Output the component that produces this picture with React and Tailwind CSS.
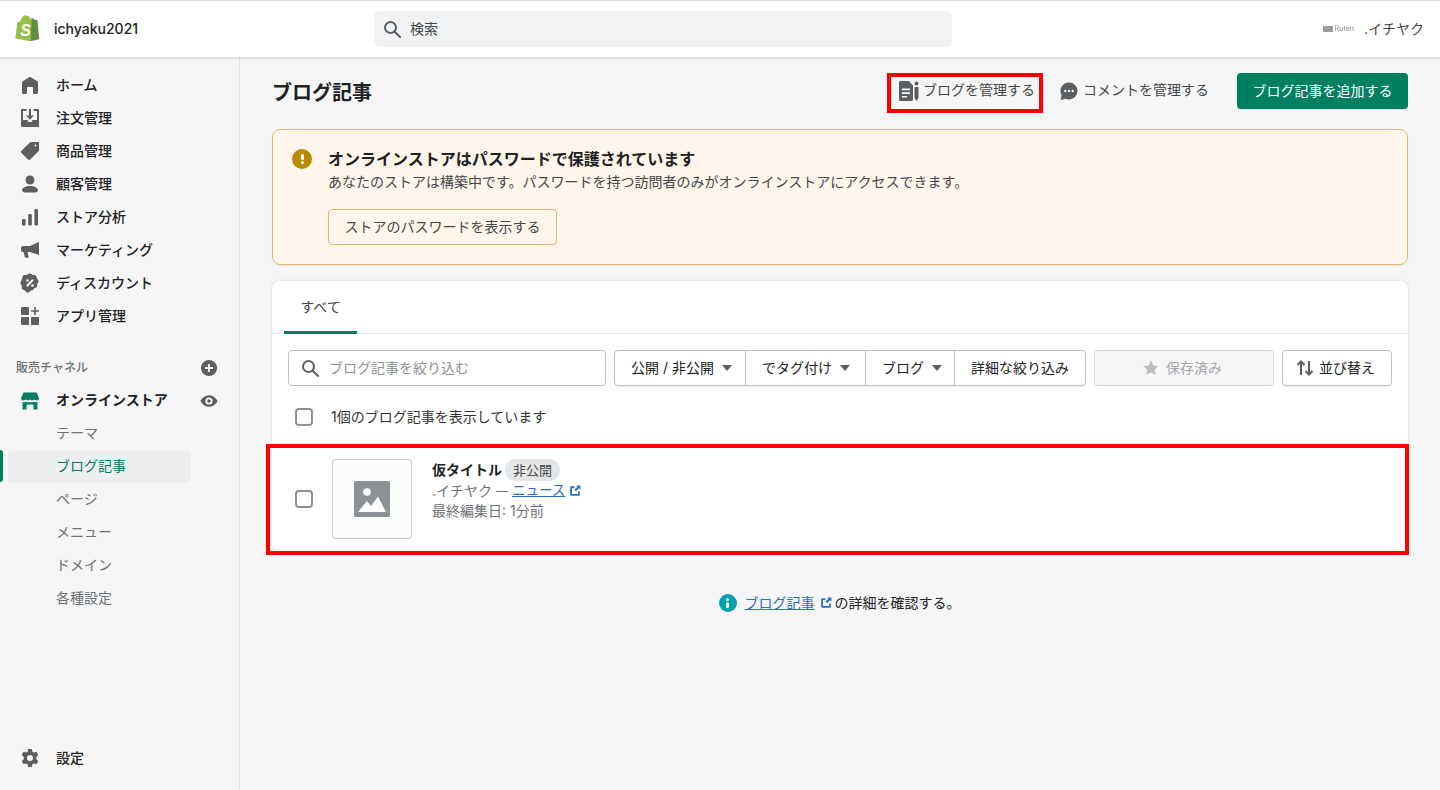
import React from 'react';

const Icon = ({ className = 'w-5 h-5 fill-[#5c5f62]', children }) => (
    <svg viewBox="0 0 20 20" className={className}>{children}</svg>
);

const HomeIcon = () => (
    <Icon><path d="M18 7.600V17.500c0 .8-.7 1.500-1.500 1.500h-2c-.8 0-1.500-.7-1.500-1.500V13c0-.6-.4-1-1-1H8c-.6 0-1 .4-1 1v4.500c0 .8-.7 1.500-1.500 1.500h-2C2.700 19 2 18.300 2 17.500V7.600c0-.5.300-1 .700-1.300l6.500-4.100c.5-.3 1.100-.3 1.600 0l6.500 4.100c.4.300.700.800.700 1.300z" /></Icon>
);
const OrdersIcon = () => (
    <Icon><path fillRule="evenodd" d="M1 1.800C1 1.300 1.400 1 1.800 1H6.500v2H3v9h4.500l1 2h3l1-2H17V3h-3.500V1h4.700c.5 0 .8.300.8.800v16.400c0 .5-.3.800-.8.800H1.800c-.4 0-.8-.3-.8-.8V1.800z" /><path d="M9 1h2v6.500h2.800L10 11.800 6.200 7.500H9V1z" /></Icon>
);
const TagIcon = () => (
    <Icon><path fillRule="evenodd" d="M11 1h7c.6 0 1 .4 1 1v7c0 .5-.2.9-.5 1.200l-8.300 8.300c-.6.6-1.600.6-2.200 0l-6.500-6.500c-.6-.6-.6-1.600 0-2.200l8.300-8.300c.3-.3.700-.5 1.200-.5zm4.500 2.500a1 1 0 1 0 0 2 1 1 0 0 0 0-2z" /></Icon>
);
const CustomerIcon = () => (
    <Icon><circle cx="10" cy="6" r="4.500" /><path d="M10 12c4.400 0 8 1.700 8 4.100 0 1.700-1.200 2.400-2.700 2.400H4.700C3.200 18.500 2 17.800 2 16.100 2 13.700 5.600 12 10 12z" /></Icon>
);
const AnalyticsIcon = () => (
    <Icon>
        <rect x="2" y="12" width="3.600" height="6.500" rx="1.200" />
        <rect x="8.200" y="7" width="3.600" height="11.500" rx="1.200" />
        <rect x="14.400" y="2" width="3.600" height="16.500" rx="1.200" />
    </Icon>
);
const MarketingIcon = () => (
    <Icon><path d="M19 2v13l-9-3H7.500l1.200 5c.1.500-.2.800-.7.800H5.600c-.3 0-.6-.2-.7-.5L3.500 12H3C1.900 12 1 11 1 10V8c0-1 .9-2 2-2h7l9-4z" /></Icon>
);
const DiscountIcon = () => (
    <Icon>
        <path fillRule="evenodd" d="M8.600 1c.8-.6 2-.6 2.800 0l1.400 1 1.700.1c1 .1 1.800.8 2 1.800l.4 1.700 1.200 1.200c.7.800.7 2 0 2.800l-.9 1.300.1 1.700c0 1-.6 1.900-1.600 2.200l-1.600.6-1 1.300c-.6.800-1.700 1.100-2.600.7L10 18.800l-1.500.6c-.9.400-2 .1-2.600-.7l-1-1.300-1.600-.6c-1-.3-1.600-1.200-1.600-2.200l.1-1.700-.9-1.300c-.6-.8-.6-2 0-2.800L2.100 5.600l.4-1.700c.2-1 1-1.700 2-1.800L6.200 2 8.600 1zM7.500 6.200a1.300 1.300 0 1 0 0 2.600 1.300 1.300 0 0 0 0-2.600zm5 5a1.300 1.300 0 1 0 0 2.600 1.300 1.300 0 0 0 0-2.600zm.7-4.600a1 1 0 0 0-1.400 0l-5.200 5.400a1 1 0 0 0 1.400 1.400l5.200-5.400a1 1 0 0 0 0-1.400z" />
    </Icon>
);
const AppsIcon = () => (
    <Icon>
        <rect x="1" y="1" width="8" height="8" rx=".7" />
        <rect x="1" y="11" width="8" height="8" rx=".7" />
        <rect x="11" y="11" width="8" height="8" rx=".7" />
        <path d="M14.200 1h1.600v3.200H19v1.600h-3.200V9h-1.600V5.800H11V4.200h3.200V1z" />
    </Icon>
);
const StoreIcon = () => (
    <Icon className="w-5 h-5 fill-[#008060]">
        <path d="M3.500 1.500h13l2.500 5.700c0 1.400-1.300 2.300-2.500 2.300-1 0-1.900-.5-2.300-1.200-.4.700-1.200 1.200-2.100 1.200-.9 0-1.700-.5-2.100-1.200-.4.700-1.200 1.200-2.100 1.200-.9 0-1.700-.5-2.100-1.200-.4.700-1.300 1.200-2.300 1.200C2.300 9.500 1 8.600 1 7.200l2.500-5.700z" />
        <path d="M2.500 11c.8.200 2.700.200 3.500-.2.900.5 2.100.7 4 .2 1.900.5 3.100.3 4-.2.800.4 2.700.4 3.500.2v7.500H13.500v-3.500c0-1-.8-1.500-1.500-1.500H8c-.7 0-1.500.5-1.500 1.500v3.500h-4V11z" />
    </Icon>
);
const BlogIcon = () => (
    <svg viewBox="0 0 20 20" className="w-5 h-5 fill-[#5c5f62]">
        <path fillRule="evenodd" d="M1.500 0h8.300L14 4.500v14c0 .8-.7 1.500-1.500 1.500h-11C.7 20 0 19.300 0 18.500v-17C0 .7.700 0 1.500 0zM3 7.500v1.700h8V7.500H3zm0 3.700v1.700h8v-1.700H3zm0 3.700v1.700h5v-1.700H3z" />
        <circle cx="17.500" cy="2.500" r="2" />
        <path d="M15.500 6h4v11L17.500 20l-2-3V6z" />
    </svg>
);
const CommentIcon = () => (
    <Icon>
        <path fillRule="evenodd" d="M10 1.500a8.500 8.500 0 0 1 0 17c-1.300 0-2.500-.3-3.600-.8l-4 1.200c-.4.100-.8-.2-.7-.6l1-3.900a8.500 8.500 0 0 1 7.300-12.900zM6.300 8.800a1.200 1.200 0 1 0 0 2.400 1.200 1.200 0 0 0 0-2.400zm3.700 0a1.200 1.200 0 1 0 0 2.400 1.200 1.200 0 0 0 0-2.400zm3.700 0a1.200 1.200 0 1 0 0 2.400 1.200 1.200 0 0 0 0-2.400z" />
    </Icon>
);
const SearchIcon = () => (
    <svg viewBox="0 0 20 20" className="w-5 h-5 fill-none stroke-[#5c5f62] stroke-2">
        <circle cx="8.500" cy="8.500" r="5.500" />
        <path d="M12.700 12.700 18 18" strokeLinecap="round" />
    </svg>
);
const ExternalIcon = ({ className = 'w-3 h-3 fill-[#2c6ecb]' }) => (
    <svg viewBox="0 0 20 20" className={className}>
        <path d="M3.500 2H9v3H5v10h10v-4h3v5.500c0 .8-.7 1.500-1.500 1.500h-13C2.700 18 2 17.300 2 16.500v-13C2 2.700 2.700 2 3.500 2z" />
        <path d="M12 1h7v7l-2.500-2.500-5 5-2.500-2.500 5-5L12 1z" />
    </svg>
);
const Caret = () => (
    <svg viewBox="0 0 10 6" className="w-[10px] h-[6px] fill-[#5c5f62]"><path d="M0 0h10L5 6z" /></svg>
);

const ShopifyLogo = () => (
    <svg viewBox="0 0 26 30" className="w-[26px] h-[28px]">
        <path d="M17.800 3.500 16.500 3.900C16 2.400 15.100 1.100 13.500 1.100h-.2C12.800.5 12.200.2 11.700.2 8.200.2 6.500 4.600 6 6.800L3.500 7.600c-.8.200-.8.300-.9 1L.5 25.100 16.700 28.200 18.200 5.200z" fill="#95bf47" />
        <path d="M17.900 3.500 19.400 3.600l1.800 1.800 2.900.2c.1 0 .2.100.2.200L26 26 16.700 28.200z" fill="#5e8e3e" />
        <text x="5.800" y="22" fontSize="17" fontWeight="700" fontStyle="italic" fill="#fff" fontFamily="Liberation Sans, sans-serif">S</text>
    </svg>
);

const NavItem = ({ icon, label }) => (
    <div className="h-[33px] flex items-center pl-[20px]">
        <span className="w-5 h-5 flex items-center justify-center">{icon}</span>
        <span className="ml-4 text-sm font-medium text-[#202223]">{label}</span>
    </div>
);

const SubItem = ({ label, active }) => (
    <div className="h-[33px] flex items-center relative">
        {active && <span className="absolute left-0 top-0 h-[32px] w-[3px] rounded-r bg-[#008060]" />}
        <div className={`ml-2 w-[183px] h-[32px] flex items-center pl-[48px] pb-[2px] rounded text-sm ${active ? 'bg-[#edeeef] text-[#007f5f]' : 'text-[#6d7175]'}`}>
            {label}
        </div>
    </div>
);

const FilterButton = ({ label, width, last }) => (
    <div className={`h-full flex items-center gap-2 whitespace-nowrap text-sm text-[#202223] ${width} ${last ? 'justify-center' : 'pl-4 border-r border-[#babfc3]'}`}>
        <span>{label}</span>
        {!last && <Caret />}
    </div>
);

const Checkbox = () => (
    <span className="w-[18px] h-[18px] rounded-[4px] border-2 border-[#8c9196] bg-white block" />
);

export default function App() {
    return (
        <div className="h-[790px] w-[1440px] overflow-hidden flex flex-col bg-[#f6f6f7] font-['Inter','Noto_Sans_CJK_JP',sans-serif] text-[#202223]">
            {/* Top bar */}
            <header className="h-[57px] shrink-0 bg-white border-t border-[#dcdde0] shadow-[0_1px_3px_rgba(0,0,0,0.18)] flex items-center relative z-10">
                <div className="w-[374px] flex items-center pl-[14px]">
                    <ShopifyLogo />
                    <span className="ml-[14px] text-sm font-medium">ichyaku2021</span>
                </div>
                <div className="w-[578px] h-9 rounded-md bg-[#f1f2f3] flex items-center pl-[8px] gap-2 text-sm text-[#44474a]">
                    <SearchIcon />
                    <span>検索</span>
                </div>
                <div className="ml-auto pr-4 flex items-center gap-[10px] text-sm text-[#44474a]">
                    <span className="text-[7px] text-[#85888b] blur-[0.3px] flex items-center gap-[2px]">
                        <span className="w-[10px] h-[6px] bg-[#9a9c9e] block" />Ruten
                    </span>
                    <span>.イチヤク</span>
                </div>
            </header>

            <div className="flex flex-1 min-h-0">
                {/* Sidebar */}
                <aside className="w-[240px] shrink-0 border-r border-[#e1e3e5] pt-[11px] pb-[16px] flex flex-col">
                    <NavItem icon={<HomeIcon />} label="ホーム" />
                    <NavItem icon={<OrdersIcon />} label="注文管理" />
                    <NavItem icon={<TagIcon />} label="商品管理" />
                    <NavItem icon={<CustomerIcon />} label="顧客管理" />
                    <NavItem icon={<AnalyticsIcon />} label="ストア分析" />
                    <NavItem icon={<MarketingIcon />} label="マーケティング" />
                    <NavItem icon={<DiscountIcon />} label="ディスカウント" />
                    <NavItem icon={<AppsIcon />} label="アプリ管理" />

                    <div className="mt-[19px] h-[33px] flex items-center justify-between pl-4 pr-[21px] text-xs text-[#6d7175] font-medium">
                        <span>販売チャネル</span>
                        <Icon className="w-[18px] h-[18px] fill-[#5c5f62]">
                            <path fillRule="evenodd" d="M10 1a9 9 0 1 1 0 18 9 9 0 0 1 0-18zM9 5.500v3.500H5.500v2H9v3.500h2V11h3.500V9H11V5.500H9z" />
                        </Icon>
                    </div>
                    <div className="h-[33px] flex items-center pl-[20px] pr-[21px]">
                        <StoreIcon />
                        <span className="ml-4 -mt-[2px] text-sm font-bold text-[#202223]">オンラインストア</span>
                        <Icon className="ml-auto w-[18px] h-[18px] fill-[#5c5f62]">
                            <path fillRule="evenodd" d="M10 3.500c4.500 0 8 3.500 9.500 6.500-1.500 3-5 6.500-9.500 6.500S2 13 .5 10C2 7 5.500 3.500 10 3.500zm0 2.500a4 4 0 1 0 0 8 4 4 0 0 0 0-8zm0 2a2 2 0 1 1 0 4 2 2 0 0 1 0-4z" />
                        </Icon>
                    </div>
                    <SubItem label="テーマ" />
                    <SubItem label="ブログ記事" active />
                    <SubItem label="ページ" />
                    <SubItem label="メニュー" />
                    <SubItem label="ドメイン" />
                    <SubItem label="各種設定" />

                    <div className="mt-auto">
                        <NavItem
                            icon={
                                <Icon>
                                    <path fillRule="evenodd" d="M8.200 1h3.600l.6 2.700 1.500.9 2.600-.9 1.800 3.200-2 1.800v2.600l2 1.800-1.800 3.200-2.600-.9-1.500.9-.6 2.700H8.200l-.6-2.700-1.500-.9-2.600.9-1.800-3.200 2-1.800V8.700l-2-1.800 1.800-3.200 2.600.9 1.500-.9L8.200 1zM10 7a3 3 0 1 0 0 6 3 3 0 0 0 0-6z" />
                                </Icon>
                            }
                            label="設定"
                        />
                    </div>
                </aside>

                {/* Main */}
                <main className="flex-1 min-w-0 pl-8 pr-8 pt-4">
                    <div className="h-9 flex items-center">
                        <h1 className="mt-1 text-xl font-bold">ブログ記事</h1>
                        <div className="ml-auto flex items-center">
                            <div className="relative flex items-center gap-[4px] mr-6 text-sm text-[#44474a]">
                                <BlogIcon />
                                <span className="-mt-[2px]">ブログを管理する</span>
                                <span className="absolute -left-[12px] -right-[8px] -top-[8px] -bottom-[12px] border-4 border-[#ff0000]" />
                            </div>
                            <div className="flex items-center gap-[4px] mr-[28px] text-sm text-[#44474a]">
                                <CommentIcon />
                                <span className="-mt-[2px]">コメントを管理する</span>
                            </div>
                            <button className="w-[171px] h-9 pb-[1px] rounded bg-[#008060] text-white text-sm shadow-[0_1px_0_rgba(0,0,0,0.1)]">
                                ブログ記事を追加する
                            </button>
                        </div>
                    </div>

                    {/* Banner */}
                    <section className="mt-5 h-[136px] rounded-lg border border-[#e8b56e] bg-[#fff5ea] pl-[19px] pt-[17px] flex shadow-[0_1px_2px_rgba(0,0,0,0.05)]">
                        <span className="w-5 h-5 mt-[2px] rounded-full bg-[#b98900] text-white flex items-center justify-center">
                            <span className="w-[3px] h-[10px] relative block">
                                <span className="block w-[3px] h-[6px] rounded-sm bg-white" />
                                <span className="block mt-[1px] w-[3px] h-[3px] rounded-full bg-white" />
                            </span>
                        </span>
                        <div className="ml-4">
                            <div className="text-base font-bold leading-[24px]">オンラインストアはパスワードで保護されています</div>
                            <div className="text-sm leading-[22px] text-[#44474a]">あなたのストアは構築中です。パスワードを持つ訪問者のみがオンラインストアにアクセスできます。</div>
                            <button className="mt-[16px] w-[229px] h-9 rounded border border-[#e8b56e] text-sm text-[#44474a] flex items-center justify-center">
                                ストアのパスワードを表示する
                            </button>
                        </div>
                    </section>

                    {/* Articles card */}
                    <section className="mt-4 h-[270px] rounded-lg bg-white shadow-[0_0_3px_rgba(0,0,0,0.14)] flex flex-col">
                        <div className="h-[53px] shrink-0 border-b border-[#e1e3e5] pl-3 flex">
                            <div className="w-[73px] h-[53px] pt-[2px] border-b-[3px] border-[#008060] rounded-b-[1px] flex items-center justify-center text-sm text-[#44474a]">
                                すべて
                            </div>
                        </div>

                        <div className="mt-4 px-4 h-9 shrink-0 flex">
                            <div className="w-[318px] h-9 rounded border border-[#babfc3] flex items-center pl-[11px] gap-[9px] text-sm text-[#8c9196]">
                                <SearchIcon />
                                <span>ブログ記事を絞り込む</span>
                            </div>
                            <div className="ml-2 w-[472px] h-9 rounded border border-[#babfc3] shadow-[0_1px_0_rgba(0,0,0,0.05)] flex">
                                <FilterButton label="公開 / 非公開" width="w-[131px]" />
                                <FilterButton label="でタグ付け" width="w-[120px]" />
                                <FilterButton label="ブログ" width="w-[89px]" />
                                <FilterButton label="詳細な絞り込み" width="w-[130px]" last />
                            </div>
                            <div className="ml-2 w-[180px] h-9 rounded border border-[#d2d5d8] bg-[#f6f6f7] flex items-center justify-center gap-[6px] pr-1 text-sm text-[#a3a7ab]">
                                <Icon className="w-[18px] h-[18px] fill-[#babec3]">
                                    <path d="m10 1.500 2.600 5.600 6 .7-4.500 4.100 1.200 6L10 15l-5.300 2.900 1.200-6L1.400 7.800l6-.7L10 1.500z" />
                                </Icon>
                                <span>保存済み</span>
                            </div>
                            <div className="ml-2 w-[110px] h-9 rounded border border-[#babfc3] shadow-[0_1px_0_rgba(0,0,0,0.05)] flex items-center pl-3 gap-1 text-sm">
                                <svg viewBox="0 0 20 20" className="w-5 h-5 fill-none stroke-[#5c5f62] stroke-2">
                                    <path d="M6 17V3.500M2.500 7 6 3.500 9.500 7M14 3v13.500M10.500 13l3.500 3.500 3.500-3.500" />
                                </svg>
                                <span>並び替え</span>
                            </div>
                        </div>

                        <div className="h-[48px] shrink-0 mt-[7px] flex items-center pl-[23px] text-sm">
                            <Checkbox />
                            <span className="ml-[18px] text-[#303336]">1個のブログ記事を表示しています</span>
                        </div>

                        <div className="relative mt-2 h-[100px] shrink-0 flex items-center pl-[23px]">
                            <Checkbox />
                            <div className="ml-[19px] w-20 h-20 rounded-[3px] border border-[#c9cccf] bg-[#fafbfb] flex items-center justify-center">
                                <svg viewBox="0 0 36 36" className="w-9 h-9">
                                    <rect width="36" height="36" rx="2" fill="#8c9196" />
                                    <circle cx="13" cy="11" r="3.800" fill="#fff" />
                                    <path d="M4 31 13 20l4 5 7-9.500L32 31z" fill="#fff" />
                                </svg>
                            </div>
                            <div className="ml-5 -mt-[18px]">
                                <div className="flex items-center h-[22px]">
                                    <span className="text-sm font-bold">仮タイトル</span>
                                    <span className="ml-[3px] h-[22px] px-2 rounded-full bg-[#e4e5e7] text-[13px] leading-[22px] text-[#44474a]">非公開</span>
                                </div>
                                <div className="flex items-center h-5 text-sm text-[#6d7175]">
                                    <span className="whitespace-pre">.イチヤク </span>
                                    <span className="text-xs">—</span>
                                    <span className="ml-1 text-[13.5px] text-[#2c6ecb] underline">ニュース</span>
                                    <span className="ml-1"><ExternalIcon /></span>
                                </div>
                                <div className="text-sm leading-5 text-[#6d7175]">最終編集日: 1分前</div>
                            </div>
                            <span className="absolute -left-[6px] -right-[1px] -top-[5px] -bottom-[6px] border-4 border-[#ff0000]" />
                        </div>
                    </section>

                    <div className="mt-[42px] flex items-center justify-center text-sm text-[#202223] pr-[1px]">
                        <span className="w-[18px] h-[18px] rounded-full bg-[#00a0ac] flex flex-col items-center justify-center gap-[1px]">
                            <span className="block w-[3px] h-[3px] rounded-full bg-white" />
                            <span className="block w-[3px] h-[6px] rounded-sm bg-white" />
                        </span>
                        <span className="ml-2 text-[#2c6ecb] underline">ブログ記事</span>
                        <span className="ml-[5px]"><ExternalIcon /></span>
                        <span className="ml-[3px]">の詳細を確認する。</span>
                    </div>
                </main>
            </div>
        </div>
    );
}
